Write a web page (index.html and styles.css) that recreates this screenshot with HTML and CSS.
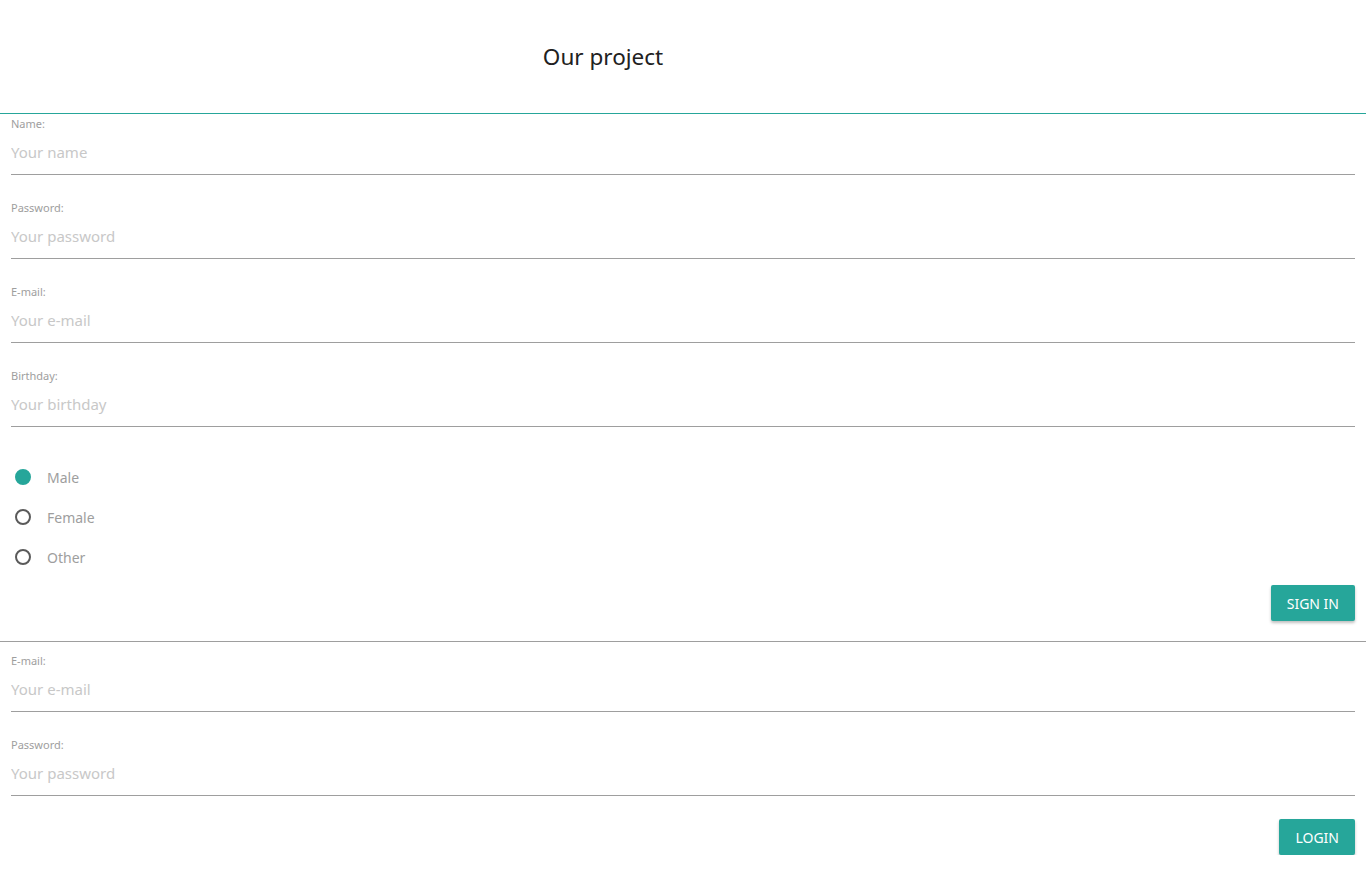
FILE: index.html
```html
<!DOCTYPE html>
<html lang="en">
<head>
<meta charset="utf-8">
<title>Our project</title>
<link rel="stylesheet" href="styles.css">
</head>
<body>
<header class="header">
  <h1 class="title">Our project</h1>
</header>
<form class="form form-signup">
  <div class="field">
    <label class="field-label">Name:</label>
    <input class="field-input" type="text" placeholder="Your name">
  </div>
  <div class="field">
    <label class="field-label">Password:</label>
    <input class="field-input" type="password" placeholder="Your password">
  </div>
  <div class="field">
    <label class="field-label">E-mail:</label>
    <input class="field-input" type="text" placeholder="Your e-mail">
  </div>
  <div class="field">
    <label class="field-label">Birthday:</label>
    <input class="field-input" type="text" placeholder="Your birthday">
  </div>
  <div class="radios">
    <label class="radio"><span class="radio-dot checked"></span><span class="radio-text">Male</span></label>
    <label class="radio"><span class="radio-dot"></span><span class="radio-text">Female</span></label>
    <label class="radio"><span class="radio-dot"></span><span class="radio-text">Other</span></label>
  </div>
  <div class="actions">
    <button class="btn" type="button">Sign in</button>
  </div>
</form>
<form class="form form-login">
  <div class="field">
    <label class="field-label">E-mail:</label>
    <input class="field-input" type="text" placeholder="Your e-mail">
  </div>
  <div class="field">
    <label class="field-label">Password:</label>
    <input class="field-input" type="password" placeholder="Your password">
  </div>
  <div class="actions actions-login">
    <button class="btn" type="button">Login</button>
  </div>
</form>
</body>
</html>
```

FILE: styles.css
```css
* { box-sizing: border-box; }
html, body { margin: 0; padding: 0; background: #fff; }
body { font-family: "Noto Sans", "Open Sans", sans-serif; color: #212121; }

.header {
  height: 114px;
  border-bottom: 1px solid #26a69a;
  display: flex;
  justify-content: center;
  padding-right: 160px;
}
.title {
  margin: 0;
  margin-top: 42px;
  font-size: 22.5px;
  font-weight: 400;
  line-height: 30px;
  color: #212121;
}

.form { padding: 3px 11px 0; }
.form-signup { border-bottom: 1px solid #9e9e9e; padding-bottom: 20px; }
.form-login { padding-top: 12px; }

.field { display: flex; flex-direction: column; margin-bottom: 26px; }
.field-label {
  font-size: 11px;
  line-height: 14px;
  color: #9e9e9e;
}
.field-input {
  border: none;
  border-bottom: 1px solid #9e9e9e;
  height: 44px;
  padding: 0 0 2px;
  font-family: inherit;
  font-size: 15px;
  color: #212121;
  outline: none;
  background: transparent;
}
.field-input::placeholder { color: #c8c8c8; }

.radios { display: flex; flex-direction: column; padding-top: 4px; }
.radio { display: flex; align-items: center; height: 40px; padding-left: 4px; }
.radio-dot {
  width: 16px; height: 16px;
  border: 2px solid #5a5a5a;
  border-radius: 50%;
  margin-right: 16px;
}
.radio-dot.checked { border-color: #26a69a; background: #26a69a; }
.radio-text { font-size: 14px; color: #9e9e9e; }

.actions { display: flex; justify-content: flex-end; padding-top: 8px; }
.actions-login { padding-top: 0; margin-top: -3px; }
.btn {
  height: 36px;
  padding: 0 16px;
  border: none;
  border-radius: 2px;
  background: #26a69a;
  color: #fff;
  font-family: inherit;
  font-size: 14px;
  text-transform: uppercase;
  box-shadow: 0 2px 3px rgba(0,0,0,0.25);
  cursor: pointer;
}
```
